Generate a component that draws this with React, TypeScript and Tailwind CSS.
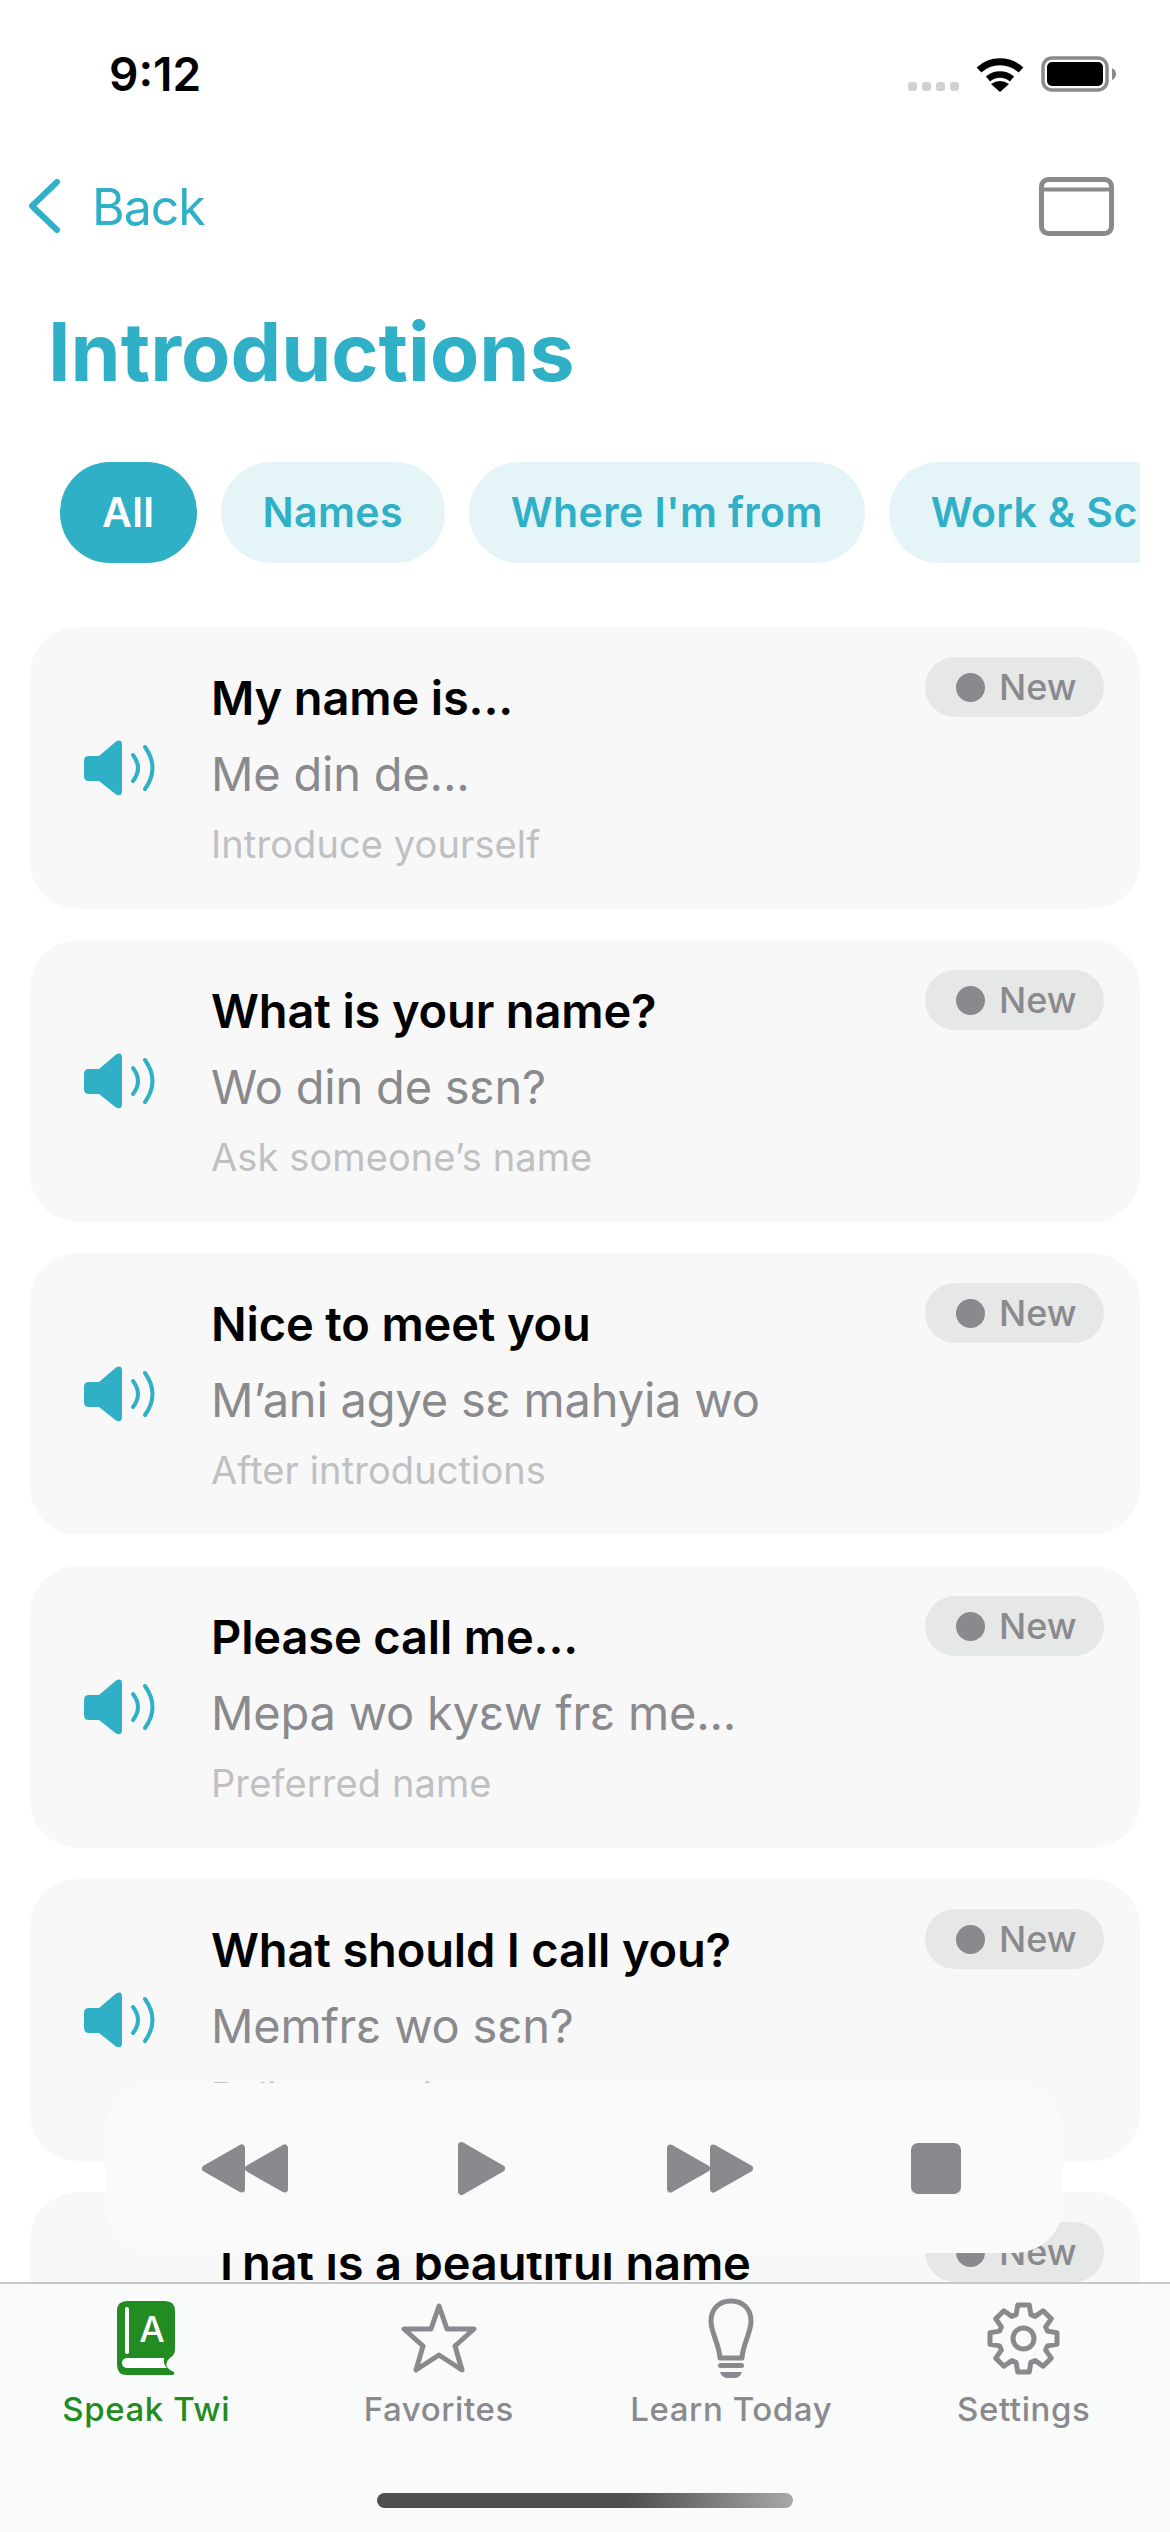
const rows = [
  { title: "My name is...", twi: "Me din de...", hint: "Introduce yourself" },
  { title: "What is your name?", twi: "Wo din de sɛn?", hint: "Ask someone’s name" },
  { title: "Nice to meet you", twi: "M’ani agye sɛ mahyia wo", hint: "After introductions" },
  { title: "Please call me...", twi: "Mepa wo kyɛw frɛ me...", hint: "Preferred name" },
  { title: "What should I call you?", twi: "Memfrɛ wo sɛn?", hint: "Polite question" },
  { title: "That is a beautiful name", twi: "Wo din no yɛ fɛ", hint: "Compliment" },
];

const gearPoints = () => {
  const pts: string[] = [];
  const cx = 36.5;
  const cy = 36.5;
  for (let i = 0; i < 8; i++) {
    const a = (i * Math.PI) / 4 - Math.PI / 2;
    const at = (r: number, d: number) =>
      `${(cx + r * Math.cos(a + d)).toFixed(2)},${(cy + r * Math.sin(a + d)).toFixed(2)}`;
    pts.push(at(25, -0.3), at(34, -0.17), at(34, 0.17), at(25, 0.3));
  }
  return pts.join(" ");
};

const Speaker = () => (
  <svg width="71" height="56" viewBox="0 0 71 56" fill="none" className="shrink-0">
    <path d="M5 16H15L32 1.5Q38-1.5 38 5V51Q38 57 32 54.5L15 41H5Q0 41 0 36V21Q0 16 5 16Z" fill="#30b0c7" />
    <path d="M49 15Q59 28 49 41" stroke="#30b0c7" strokeWidth="4" strokeLinecap="round" />
    <path d="M61 7Q76 28 61 49" stroke="#30b0c7" strokeWidth="4" strokeLinecap="round" />
  </svg>
);

const Row = ({ title, twi, hint }: { title: string; twi: string; hint: string }) => (
  <div className="relative flex h-[282px] items-center rounded-[48px] bg-[#f8f8f8] pl-[54px]">
    <Speaker />
    <div className="ml-[56px] flex flex-col">
      <div className="text-[47px] leading-[76px] font-semibold tracking-[-0.15px] text-black">{title}</div>
      <div className="text-[47px] leading-[76px] tracking-[-0.2px] text-[#8a8a8e]">{twi}</div>
      <div className="text-[38px] leading-[64px] tracking-[0.1px] text-[#c0c0c2]">{hint}</div>
    </div>
    <div className="absolute top-[30px] right-[36px] flex h-[60px] w-[179px] items-center rounded-full bg-[#e6e7e7] pl-[31px]">
      <span className="h-[29px] w-[29px] rounded-full bg-[#8a8a8e]" />
      <span className="ml-[14px] text-[36px] leading-none font-medium text-[#8a8a8e]">New</span>
    </div>
  </div>
);

const Chip = ({ label, active }: { label: string; active?: boolean }) => (
  <div
    className={
      active
        ? "flex h-[101px] shrink-0 items-center rounded-[50px] bg-[#30b0c7] px-[42px] text-[41px] font-semibold tracking-[0.4px] text-white"
        : "flex h-[101px] shrink-0 items-center rounded-[50px] bg-[#e5f4f7] px-[42px] text-[41px] font-semibold tracking-[0.4px] text-[#30b0c7]"
    }
  >
    {label}
  </div>
);

const BookIcon = () => (
  <svg width="58" height="74" viewBox="0 0 58 74">
    <path d="M10 0H48Q58 0 58 10V48Q58 54 53 57Q48 61 50 66Q52 69 57 71Q58 74 55 74H10Q0 74 0 64V10Q0 0 10 0Z" fill="#228b22" />
    <rect x="8" y="6" width="4" height="47" rx="2" fill="#fff" />
    <path d="M11 57H47Q46 63 50 67H11Q5 67 5 62Q5 57 11 57Z" fill="#fff" />
    <text x="35" y="41" textAnchor="middle" fontSize="36" fontWeight="500" fill="#fff" fontFamily="Inter, sans-serif">A</text>
  </svg>
);

const StarIcon = () => (
  <svg width="76" height="72" viewBox="0 0 76 72" fill="none">
    <path d="M38 4L46 27H73L54 44L61 68L38 53L15 68L22 44L3 27H30Z" stroke="#8a8a8e" strokeWidth="5" strokeLinejoin="round" />
  </svg>
);

const BulbIcon = () => (
  <svg width="46" height="80" viewBox="0 0 46 80" fill="none">
    <path d="M12 60C11 45 3 35 3 23C3 11 11 3 23 3C35 3 43 11 43 23C43 35 35 45 34 60Z" stroke="#8a8a8e" strokeWidth="5" strokeLinejoin="round" />
    <rect x="10" y="65" width="26" height="5" rx="2.5" fill="#8a8a8e" />
    <path d="M12 74H34Q32 80 26 80H20Q14 80 12 74Z" fill="#8a8a8e" />
  </svg>
);

const GearIcon = () => (
  <svg width="73" height="73" viewBox="0 0 73 73" fill="none">
    <polygon points={gearPoints()} stroke="#8a8a8e" strokeWidth="5" strokeLinejoin="round" />
    <circle cx="36.5" cy="36.5" r="10.5" stroke="#8a8a8e" strokeWidth="5" />
  </svg>
);

const Tab = ({ label, active, icon }: { label: string; active?: boolean; icon: React.ReactNode }) => (
  <div className="flex flex-col items-center">
    <div className="flex h-[80px] items-center">{icon}</div>
    <div
      className={
        active
          ? "mt-[11px] text-[33px] leading-[40px] font-medium tracking-[0.6px] text-[#228b22]"
          : "mt-[11px] text-[33px] leading-[40px] font-medium tracking-[0.6px] text-[#8a8a8e]"
      }
    >
      {label}
    </div>
  </div>
);

export default function App() {
  return (
    <div className="relative h-[2532px] w-[1170px] overflow-hidden bg-white font-['Inter','Noto_Sans',sans-serif]">
      {/* status bar */}
      <div className="flex h-[148px] items-center pr-[54px] pl-[109px]">
        <span className="text-[46px] font-semibold text-black">9:12</span>
        <div className="ml-auto flex items-center">
          <div className="mt-[25px] flex gap-[5px]">
            <span className="h-[9px] w-[9px] rounded-[3px] bg-[#d1d1d3]" />
            <span className="h-[9px] w-[9px] rounded-[3px] bg-[#d1d1d3]" />
            <span className="h-[9px] w-[9px] rounded-[3px] bg-[#d1d1d3]" />
            <span className="h-[9px] w-[9px] rounded-[3px] bg-[#d1d1d3]" />
          </div>
          <svg width="48" height="36" viewBox="0 0 48 36" fill="none" className="ml-[17px]">
            <path d="M3 14C15 3 33 3 45 14" stroke="#000" strokeWidth="7" />
            <path d="M12 23C19 17 29 17 36 23" stroke="#000" strokeWidth="6.5" />
            <path d="M24 36L15 28Q24 22 33 28Z" fill="#000" />
          </svg>
          <svg width="75" height="36" viewBox="0 0 75 36" fill="none" className="ml-[17px]">
            <rect x="2" y="2" width="64" height="32" rx="9" stroke="#8a8a8e" strokeWidth="3.5" />
            <rect x="6" y="6" width="56" height="24" rx="5" fill="#000" />
            <path d="M71 12Q75 14 75 18Q75 22 71 24Z" fill="#8a8a8e" />
          </svg>
        </div>
      </div>

      {/* nav */}
      <div className="flex h-[116px] items-center pr-[56px] pl-[28px]">
        <svg width="33" height="56" viewBox="0 0 33 56" fill="none">
          <path d="M29 4L4 28L29 52" stroke="#30b0c7" strokeWidth="6" strokeLinecap="round" strokeLinejoin="round" />
        </svg>
        <span className="mt-[3px] ml-[31px] text-[50px] tracking-[-1px] text-[#30b0c7]">Back</span>
        <svg width="75" height="59" viewBox="0 0 75 59" fill="none" className="ml-auto">
          <rect x="2.5" y="2.5" width="70" height="54" rx="7" stroke="#8a8a8e" strokeWidth="5" />
          <path d="M2 12.5H73" stroke="#8a8a8e" strokeWidth="4" />
        </svg>
      </div>

      {/* title */}
      <div className="flex h-[174px] items-center pt-[2px] pl-[48px]">
        <h1 className="text-[80.5px] font-bold text-[#30b0c7]">Introductions</h1>
      </div>

      {/* filter chips */}
      <div className="mt-[24px] mr-[30px] flex gap-[24px] overflow-hidden pl-[60px]">
        <Chip label="All" active />
        <Chip label="Names" />
        <Chip label="Where I'm from" />
        <Chip label="Work & School" />
      </div>

      {/* phrases */}
      <div className="mt-[64px] flex flex-col gap-[31px] px-[30px]">
        {rows.map((row) => (
          <Row key={row.title} {...row} />
        ))}
      </div>

      {/* player */}
      <div className="absolute bottom-[279px] left-[105px] flex h-[170px] w-[958px] items-center rounded-[48px] bg-[#fafafa] pl-[97px]">
        <svg width="86" height="49" viewBox="0 0 86 49" fill="#8a8a8e" stroke="#8a8a8e" strokeWidth="7" strokeLinejoin="round">
          <path d="M3.5 24.5L39.5 4V45Z" />
          <path d="M46.5 24.5L82.5 4V45Z" />
        </svg>
        <svg width="47" height="53" viewBox="0 0 47 53" fill="#8a8a8e" stroke="#8a8a8e" strokeWidth="7" strokeLinejoin="round" className="ml-[170px]">
          <path d="M3.5 3.5L43.5 26.5L3.5 49.5Z" />
        </svg>
        <svg width="86" height="49" viewBox="0 0 86 49" fill="#8a8a8e" stroke="#8a8a8e" strokeWidth="7" strokeLinejoin="round" className="ml-[162px]">
          <path d="M3.5 4L39.5 24.5L3.5 45Z" />
          <path d="M46.5 4L82.5 24.5L46.5 45Z" />
        </svg>
        <div className="ml-[158px] h-[51px] w-[50px] rounded-[7px] bg-[#8a8a8e]" />
      </div>

      {/* tab bar */}
      <div className="absolute inset-x-0 bottom-0 h-[250px] border-t-2 border-[#c8c8c8] bg-[#f9fafa]">
        <div className="mt-[14px] grid grid-cols-4">
          <Tab label="Speak Twi" active icon={<BookIcon />} />
          <Tab label="Favorites" icon={<StarIcon />} />
          <Tab label="Learn Today" icon={<BulbIcon />} />
          <Tab label="Settings" icon={<GearIcon />} />
        </div>
        <div className="absolute bottom-[24px] left-[377px] h-[15px] w-[416px] rounded-full bg-linear-to-r from-[#4f4f4f] from-60% to-[#a8a8a8]" />
      </div>
    </div>
  );
}
